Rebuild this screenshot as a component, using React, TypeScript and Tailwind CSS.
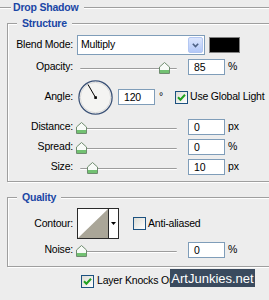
import type { ReactNode } from "react";

const etched = "border-[#9f9f9f] shadow-[inset_1px_1px_0_#fff,1px_1px_0_#fff]";

function Thumb({ pos }: { pos: string }) {
  return (
    <svg className={`absolute top-[5px] ${pos}`} width="11" height="12" viewBox="0 0 11 12">
      <path d="M5.5 0.5 L10.5 5 L10.5 11.5 L0.5 11.5 L0.5 5 Z" fill="#f7faf7" stroke="#6f8c6f" />
      <rect x="1" y="8" width="9" height="3" fill="#72c172" />
    </svg>
  );
}

function Slider({ pos }: { pos: string }) {
  return (
    <div className="relative ml-[4px] h-[20px] w-[103px] shrink-0">
      <div className="mx-[3px] mt-[11px] h-[2px] rounded-full border-t border-[#9c9c9c] bg-white" />
      <Thumb pos={pos} />
    </div>
  );
}

function NumBox({ value, className = "" }: { value: string; className?: string }) {
  return (
    <div
      className={`flex h-[16px] w-[37px] shrink-0 items-center border border-[#7f9db9] bg-white pl-[5px] leading-none ${className}`}
    >
      {value}
    </div>
  );
}

function Check({ on }: { on?: boolean }) {
  return (
    <span className="flex h-[13px] w-[13px] shrink-0 items-center justify-center border border-[#1c5180] bg-linear-to-br from-[#dcdcd5] to-white">
      {on && (
        <svg width="9" height="9" viewBox="0 0 9 9">
          <path d="M1 4.3 L3.4 6.8 L8 1.8" fill="none" stroke="#21a121" strokeWidth="2" />
        </svg>
      )}
    </span>
  );
}

function SliderRow({
  label,
  pos,
  value,
  unit,
  className = "",
}: {
  label: string;
  pos: string;
  value: string;
  unit: string;
  className?: string;
}) {
  return (
    <div className={`flex h-[20px] items-center ${className}`}>
      <span className="w-[65px] shrink-0 text-right">{label}</span>
      <Slider pos={pos} />
      <NumBox value={value} className="ml-[8px]" />
      <span className="ml-[3px]">{unit}</span>
    </div>
  );
}

function Group({ title, children, className = "" }: { title: string; children: ReactNode; className?: string }) {
  return (
    <fieldset className={`ml-[7px] border ${etched} ${className}`}>
      <legend className="ml-[9px] bg-[#ededed] px-[5px] font-bold leading-[14px] text-[#1a46a5]">{title}</legend>
      {children}
    </fieldset>
  );
}

export default function App() {
  return (
    <div className="relative h-[300px] w-[269px] overflow-hidden bg-[#ededed] font-['Liberation_Sans',Arial,sans-serif] text-[10.5px] tracking-[-0.2px] text-black">
      <div className="w-[290px]">
        <div className="flex h-[14px] items-center">
          <div className="h-px w-[11px] bg-[#9f9f9f] shadow-[0_1px_0_#fff]" />
          <span className="pl-[2px] pr-[6px] font-bold leading-[14px] text-[#1a46a5]">Drop Shadow</span>
          <div className="h-px flex-1 bg-[#9f9f9f] shadow-[0_1px_0_#fff]" />
        </div>

        <Group title="Structure" className="mt-[2px]">
          <div className="pb-[4px] pt-[5px]">
            <div className="flex h-[20px] items-center">
              <span className="w-[65px] shrink-0 text-right">Blend Mode:</span>
              <div className="ml-[4px] flex h-[20px] w-[128px] items-center border border-[#7f9db9] bg-white pl-[3px] pr-[1px]">
                <span className="flex-1">Multiply</span>
                <span className="flex h-[16px] w-[15px] items-center justify-center rounded-[2px] border border-[#b3c7f2] bg-linear-to-b from-[#dce6fd] to-[#b3c8f8]">
                  <svg width="7" height="5" viewBox="0 0 7 5">
                    <path d="M0.8 0.8 L3.5 3.6 L6.2 0.8" fill="none" stroke="#4d6185" strokeWidth="1.6" />
                  </svg>
                </span>
              </div>
              <div className="ml-[4px] h-[16px] w-[31px] border border-[#808080] bg-black" />
            </div>

            <SliderRow label="Opacity:" pos="left-[82px]" value="85" unit="%" className="mt-[2px]" />

            <div className="flex h-[40px] items-center">
              <span className="w-[65px] shrink-0 text-right">Angle:</span>
              <svg className="ml-[5px] shrink-0" width="35" height="35" viewBox="0 0 35 35">
                <circle cx="17.5" cy="17.5" r="16.6" fill="#f4f4f2" stroke="#3b5277" strokeWidth="1.3" />
                <circle cx="17.5" cy="17.5" r="15.2" fill="none" stroke="#dadada" strokeWidth="1" />
                <line x1="17.5" y1="17.5" x2="10" y2="4.5" stroke="#000" strokeWidth="1" />
                <rect x="16.3" y="16.3" width="2.6" height="2.6" fill="#000" />
              </svg>
              <NumBox value="120" className="ml-[5px]" />
              <span className="ml-[4px] w-[16px] shrink-0">°</span>
              <Check on />
              <span className="ml-[2px] whitespace-nowrap">Use Global Light</span>
            </div>

            <SliderRow label="Distance:" pos="left-[-1px]" value="0" unit="px" />
            <SliderRow label="Spread:" pos="left-[-1px]" value="0" unit="%" />
            <SliderRow label="Size:" pos="left-[10px]" value="10" unit="px" />
          </div>
        </Group>

        <Group title="Quality" className="mt-[8px]">
          <div className="pb-[6px] pt-[4px]">
            <div className="flex h-[31px] items-center">
              <span className="w-[65px] shrink-0 text-right">Contour:</span>
              <div className="ml-[4px] flex h-[31px] w-[42px] shrink-0 border border-[#2a2a2a] bg-white">
                <svg className="h-full w-[30px]" viewBox="0 0 30 29" preserveAspectRatio="none">
                  <polygon points="0,29 30,0 30,29" fill="#aaa698" />
                </svg>
                <div className="flex flex-1 items-center justify-center border-l border-[#2a2a2a]">
                  <svg width="5" height="3" viewBox="0 0 5 3">
                    <polygon points="0,0 5,0 2.5,3" fill="#000" />
                  </svg>
                </div>
              </div>
              <span className="ml-[14px]">
                <Check />
              </span>
              <span className="ml-[2px] whitespace-nowrap">Anti-aliased</span>
            </div>
            <SliderRow label="Noise:" pos="left-[-1px]" value="0" unit="%" className="mt-[1px]" />
          </div>
        </Group>

        <div className="mt-[7px] flex h-[14px] items-center pl-[81px]">
          <Check on />
          <span className="ml-[3px] whitespace-nowrap">Layer Knocks Out Drop Shadow</span>
        </div>
      </div>

      <div className="absolute left-[170px] top-[269px] flex h-[18px] w-[85px] items-center justify-center bg-[#3a4a5e] text-[13px] leading-none tracking-normal text-white">
        ArtJunkies.net
      </div>
    </div>
  );
}
